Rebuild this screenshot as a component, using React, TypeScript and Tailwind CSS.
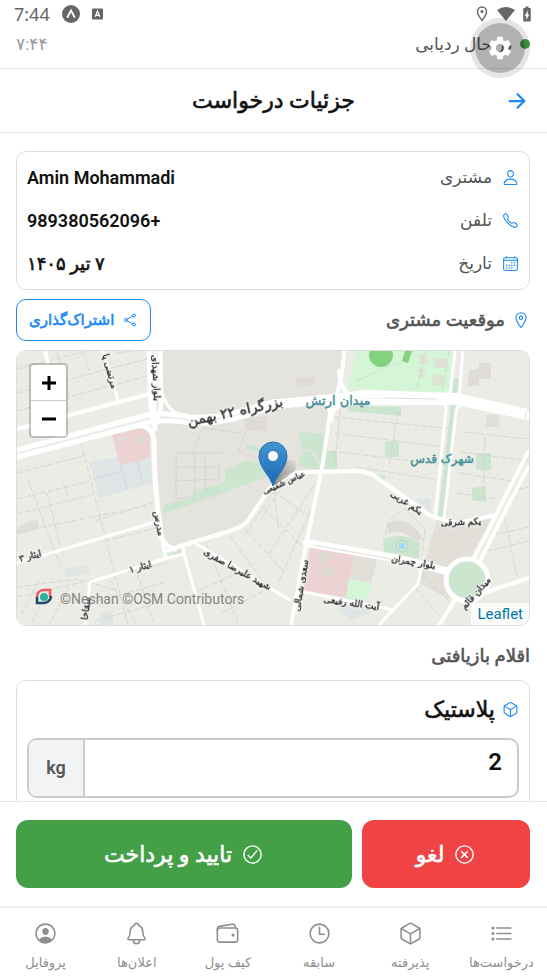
import {
  IoArrowForward,
  IoCalendarOutline,
  IoCallOutline,
  IoCheckmarkCircleOutline,
  IoCloseCircleOutline,
  IoCubeOutline,
  IoListOutline,
  IoLocationOutline,
  IoNotificationsOutline,
  IoPersonCircleOutline,
  IoPersonOutline,
  IoShareSocialOutline,
  IoTimeOutline,
  IoWalletOutline,
} from "react-icons/io5";
import { MdBatteryChargingFull, MdSettings } from "react-icons/md";

// DejaVu has no Persian semibold, so its regular weight is thickened with a stroke
const strong = "font-normal [-webkit-text-stroke:0.6px_currentColor]";

const details = [
  { label: "مشتری", value: "Amin Mohammadi", icon: IoPersonOutline, weight: "font-semibold" },
  { label: "تلفن", value: "+989380562096", icon: IoCallOutline, weight: "font-semibold" },
  { label: "تاریخ", value: "۷ تیر ۱۴۰۵", icon: IoCalendarOutline, weight: strong },
];

const tabs = [
  { label: "درخواست‌ها", icon: IoListOutline },
  { label: "پذیرفته", icon: IoCubeOutline },
  { label: "سابقه", icon: IoTimeOutline },
  { label: "کیف پول", icon: IoWalletOutline },
  { label: "اعلان‌ها", icon: IoNotificationsOutline },
  { label: "پروفایل", icon: IoPersonCircleOutline },
];

const roads = [
  { d: "M0 78 L136 42", w: 4 },
  { d: "M28 0 L31 11", w: 4 },
  { d: "M86 0 L101 49", w: 3 },
  { d: "M132 0 L134 56 L138 78", w: 5 },
  { d: "M143 0 L144 56 L137 78", w: 5 },
  { d: "M138 0 V60", w: 3 },
  { d: "M145 42 C150 60 162 66 176 66", w: 3 },
  { d: "M0 99 L130 64 Q150 61 173 66 C205 68 230 58 256 51 L323 45", w: 5 },
  { d: "M0 106 L133 71 Q152 68 173 72 C210 74 235 62 256 56 L323 49", w: 5 },
  { d: "M310 48 L350 43 L439 46 L511 62", w: 8 },
  { d: "M320 51 L439 51 L511 66", w: 6 },
  { d: "M122 74 Q136 76 137 90 L138 127 L141 160 L145 188 Q149 196 158 198", w: 5 },
  { d: "M143 180 L149 207", w: 3 },
  { d: "M0 212 L138 171", w: 3 },
  { d: "M68 274 L73 231 L150 207 L166 203 V197", w: 3 },
  { d: "M149 200 L176 191 L210 181 Q224 177 230 171 L252 138 Q264 124 286 121 L344 120 L356 124 L403 157 Q415 169 443 171 L476 165", w: 4 },
  { d: "M176 191 L215 214 L256 239 L273 249", w: 3 },
  { d: "M166 199 L187 274", w: 3 },
  { d: "M327 0 Q325 30 319 45 Q312 60 310 83 L306 111 L289 194 L274 274", w: 4 },
  { d: "M322 20 Q324 42 336 45 M302 48 Q314 50 314 70 Q314 55 332 50", w: 4 },
  { d: "M290 192 L383 208 L429 220", w: 8 },
  { d: "M456 209 L480 162 L511 101", w: 4 },
  { d: "M462 212 L484 168 L511 116", w: 4 },
  { d: "M469 241 L512 227", w: 4 },
  { d: "M438 249 L422 274", w: 4 },
  { d: "M438 0 L433 43", w: 3 },
  { d: "M446 0 L442 46", w: 3 },
  { d: "M424 50 Q429 52 429 58 L418 167", w: 3 },
  { d: "M446 53 Q440 55 439 60 L427 168", w: 3 },
  { d: "M288 241 L376 259", w: 3 },
  { d: "M403 215 Q404 227 400 234 L376 259 L362 274", w: 3 },
];

const lanes = [
  "M0 18 L84 -4 M0 42 L130 8 M0 60 L130 25 M64 92 L111 274 M0 148 L73 130 M0 163 L78 143",
  "M0 181 L130 155 M46 132 L52 146 M11 128 L18 148 L45 220 M0 122 L70 104 M0 246 L150 212",
  "M78 170 L140 150 M88 190 L142 176 M40 0 L52 45 M66 0 L72 20 M100 2 L130 -2",
  "M30 142 L46 205 M0 236 L60 228 L102 240 M22 230 L4 264 M30 238 L14 274 M52 236 L32 274",
  "M94 230 L120 274 M120 222 L136 270 M80 250 L150 231 M78 270 L170 244",
  "M186 184 L222 274 M208 178 L250 236 M225 174 L268 222 M180 240 L230 218 M205 262 L250 238",
  "M240 150 L288 198 M256 140 L295 168 M246 165 L274 122 M228 184 L262 133 M252 203 L300 130",
  "M262 230 L298 150 M256 132 L262 180",
  "M316 66 L436 78 M318 82 L432 97 M314 100 L430 114 M340 116 L428 130 M381 60 L372 116 M324 52 L318 112",
  "M446 81 L512 88 M444 101 L512 110 M442 122 L495 130 M440 142 L480 148 M468 86 L466 146",
  "M486 160 L500 225 M476 184 L512 176 M470 200 L512 190 M492 140 L512 136",
  "M339 30 L384 10 M408 0 L400 40 M432 0 L425 42 M405 224 L432 250 M398 236 L420 262",
  "M368 184 L372 170 L388 157 L408 178 L405 205",
  "M186 77 L226 82 M186 77 L176 102 M222 100 L232 70 L248 72 M222 100 L243 108",
];

const blocks = "M159 102 H205 M159 116 H202 M158 130 L200 128 M159 102 V146 M178 102 V146 M188 108 V142 M202 112 V131 M158 148 L176 146";

const mapLabels = [
  { text: "بزرگراه ۲۲ بهمن", x: 219, y: 65, r: -12, size: 14 },
  { text: "بلوار شهدای", x: 136, y: 27, r: 87, size: 9 },
  { text: "مرتضی پا", x: 90, y: 21, r: 75, size: 9 },
  { text: "مدرس", x: 139, y: 173, r: 80, size: 9 },
  { text: "ایثار ۳", x: 14, y: 208, r: -15, size: 9 },
  { text: "ایثار ۱", x: 124, y: 219, r: -15, size: 9 },
  { text: "سقاخا", x: 72, y: 258, r: -82, size: 9 },
  { text: "شهید علیرضا صفری", x: 219, y: 221, r: 29, size: 9 },
  { text: "عباس شفیعی", x: 268, y: 134, r: -24, size: 8 },
  { text: "سعدی شمالی", x: 287, y: 235, r: -80, size: 9 },
  { text: "یکم غربی", x: 388, y: 154, r: 33, size: 9 },
  { text: "یکم شرقی", x: 444, y: 174, r: -2, size: 9 },
  { text: "بلوار چمران", x: 396, y: 214, r: 10, size: 9 },
  { text: "آیت الله رفیعی", x: 334, y: 255, r: 8, size: 9 },
  { text: "میدان قائم", x: 461, y: 244, r: -48, size: 9 },
];

function StreetMap() {
  return (
    <svg
      viewBox="0 0 512 274"
      preserveAspectRatio="xMidYMid slice"
      className="block h-full w-full font-['DejaVu_Sans',sans-serif]"
      aria-label="نقشه"
    >
      <rect width="512" height="274" fill="#ebece6" />
      <path d="M143 0 H327 L306 120 L286 121 Q264 124 252 138 L230 171 L155 197 L145 188 L137 82 Z" fill="#e5e3de" />
      <path d="M420 168 L476 166 L450 212 L432 248 L402 232 Z" fill="#e1dfd8" />
      <path d="M337 204 L360 208 L354 232 L332 228 Z M0 175 L20 168 L22 178 L0 184 Z M392 40 h20 v12 h-20 Z M470 64 h12 v12 h-14 Z" fill="#e1dfd8" />
      <path d="M452 20 l10 -3 v18 h-12 Z M462 12 h12 v16 h-12 Z M278 26 h20 v8 h-18 Z M226 66 h24 v14 h-20 Z" fill="#dedcd5" />
      <path d="M369 173 q20 -12 37 14 l-6 3 q-14 -12 -28 -8 Z" fill="#dedcd5" />
      <path d="M72 111 L101 106 L103 113 L133 107 L136 132 L82 147 Z" fill="#dfe5e5" />
      <path d="M103 113 L110 138 M120 110 L126 134 M76 128 L106 120" stroke="#cfd6e4" fill="none" />
      <path d="M46 218 L72 214 V222 L50 226 Z M84 262 L96 260 V274 H82 Z M316 250 L350 240 L354 262 L332 270 Z M398 148 h16 v14 Z" fill="#dfe5e5" />
      <path d="M95 84 L126 77 Q133 79 133 85 V107 L103 114 Z M293 196 L337 204 L329 246 L286 241 Z" fill="#ecd2d3" />
      <path d="M99 87 l11 -3 v4 l-10 3 Z M117 86 l12 -3 v8 l-8 3 Z M302 201 h14 v8 h-5 v6 h6 v10 h-17 v-5 h8 v-8 h-6 Z" fill="#e1d9d3" />
      <path d="M146 154 L176 146 V141 L208 131 V119 L230 109 L246 112 L256 121 L250 126 L146 163 Z M208 131 V141" fill="#cce5cf" />
      <path d="M229 93 L248 97 V102 L229 98 Z M281 83 Q284 79 307 84 V100 L304 118 H294 Q280 116 281 110 L286 101 Z M309 100 H320 V118 H307 Z" fill="#cce5cf" />
      <path d="M283 101 Q293 96 297 104 T304 114" fill="none" stroke="#e5e3de" strokeWidth="2" />
      <path d="M331 55 L384 56 V65 L331 60 Z M368 90 h14 v16 h-14 Z M459 102 h15 v18 l-15 -2 Z M455 137 l14 -2 v16 l-14 -2 Z M356 124 L368 124 V132 Z" fill="#cce5cf" />
      <path d="M437 27 H442 L429 166 H421 Z M146 190 L154 198 L150 204 Z M151 204 L165 197 V202 L150 207 Z M366 188 Q386 180 403 192 L402 208 L367 201 Z" fill="#cce5cf" />
      <path d="M339 0 H437 L432 43 L331 37 Z M332 228 L354 232 L351 250 L329 246 Z" fill="#d5f5d7" />
      <path d="M402 3 h8 v10 h-8 Z M417 7 h13 v10 h-13 Z M416 24 h11 v10 h-12 Z M402 18 h6 v9 h-7 Z" fill="#dfe3d5" />
      <circle cx="364" cy="4" r="12" fill="#82d27f" />
      <path d="M388 0 H395 L391 12 L385 10 Z" fill="#82d27f" />
      <circle cx="385" cy="195" r="6" fill="none" stroke="#b3d5c3" />
      <circle cx="385" cy="195" r="3" fill="#99dcfb" />
      {lanes.map((d) => (
        <path key={d} d={d} fill="none" stroke="#d0d0cb" strokeDasharray="6 2" strokeWidth="0.8" />
      ))}
      <path d={blocks} fill="none" stroke="#d2d1cc" strokeWidth="0.8" />
      {roads.map((road) => (
        <path
          key={road.d}
          d={road.d}
          fill="none"
          stroke="#ffffff"
          strokeWidth={road.w}
          strokeLinecap="round"
          strokeLinejoin="round"
        />
      ))}
      <path d="M296 194 L380 209 M366 47 L420 48 M509 68 Q507 62 512 58" fill="none" stroke="#dededa" strokeWidth="1" />
      <circle cx="450" cy="229" r="21" fill="#cce5cf" stroke="#ffffff" strokeWidth="5" />
      {mapLabels.map((label) => (
        <g
          key={label.text}
          transform={`translate(${label.x} ${label.y}) rotate(${label.r})`}
          textAnchor="middle"
          fontSize={label.size}
        >
          <text
            fill="#2b2b2b"
            stroke="#2b2b2b"
            strokeWidth="0.4"
            className="[filter:drop-shadow(0_0_1px_#fff)_drop-shadow(0_0_1px_#fff)]"
          >
            {label.text}
          </text>
        </g>
      ))}
      <g fill="#4c929b" stroke="#4c929b" strokeWidth="0.5" textAnchor="middle">
        <text x="321" y="54" fontSize="13">میدان ارتش</text>
        <text x="425" y="112" fontSize="12">شهرک قدس</text>
      </g>
      <g fill="none" strokeWidth="2.6">
        <path d="M20 246 A7 7 0 0 1 26 239 L33 239 V246" stroke="#ef5a5f" />
        <path d="M20 246 V252 H27 A7 7 0 0 0 34 245" stroke="#204a66" />
      </g>
      <circle cx="27" cy="246" r="4" fill="#27b59a" />
      <text x="43" y="253" fontSize="14" fill="#858585" className="font-['Roboto',sans-serif]" direction="ltr">
        ©Neshan ©OSM Contributors
      </text>
    </svg>
  );
}

function MapPin() {
  return (
    <svg width="56" height="46" viewBox="0 0 56 46" aria-hidden="true">
      <defs>
        <linearGradient id="pin" x1="0" y1="0" x2="0" y2="1">
          <stop offset="0" stopColor="#4297d5" />
          <stop offset="1" stopColor="#1b66b5" />
        </linearGradient>
        <linearGradient id="shade" x1="0" y1="1" x2="1" y2="0">
          <stop offset="0" stopColor="#000" stopOpacity="0.5" />
          <stop offset="1" stopColor="#000" stopOpacity="0" />
        </linearGradient>
      </defs>
      <path d="M28 45 L34 26 Q46 14 51 21 Q54 29 42 36 Z" fill="url(#shade)" />
      <path
        d="M28 45 C25 34 14 27 14 15 A14 14 0 0 1 42 15 C42 27 31 34 28 45 Z"
        fill="url(#pin)"
        stroke="#2a70ac"
      />
      <circle cx="28" cy="15" r="5.5" fill="#fff" stroke="#2f75ae" />
    </svg>
  );
}

function StatusBar() {
  return (
    <div dir="ltr" className="flex h-7 items-center justify-between pl-[14px] pr-[11px] text-[#666]">
      <div className="flex items-center gap-3">
        <span className="font-['Noto_Sans',sans-serif] text-lg leading-7">7:44</span>
        <svg width="18" height="18" viewBox="0 0 18 18" aria-hidden="true">
          <circle cx="9" cy="9" r="9" fill="#666" />
          <path d="M5.5 12 L9 5.5 L12.5 12" fill="none" stroke="#fff" strokeWidth="1.8" strokeLinecap="round" />
        </svg>
        <svg width="11" height="12" viewBox="0 0 12 12" aria-hidden="true">
          <rect width="12" height="12" rx="1" fill="#666" />
          <path d="M3.5 9 L6 3 L8.5 9 M4.5 7.5 H7.5" fill="none" stroke="#fff" strokeWidth="1.4" />
        </svg>
      </div>
      <div className="flex items-center gap-[3px]">
        <svg className="mr-[6px]" width="12" height="16" viewBox="0 0 12 16" fill="none" stroke="#666" strokeWidth="1.4" aria-hidden="true">
          <path d="M6 14.5 C4 11.5 1.5 9 1.5 5.5 A4.5 4.5 0 0 1 10.5 5.5 C10.5 9 8 11.5 6 14.5 Z" />
          <circle cx="6" cy="5.5" r="1.5" fill="#666" stroke="none" />
        </svg>
        <svg width="18" height="14" viewBox="0 0 18 14" fill="#666" aria-hidden="true">
          <path d="M9 14 L0 3 Q9 -3 18 3 Z" />
        </svg>
        <MdBatteryChargingFull size={18} />
      </div>
    </div>
  );
}

export default function App() {
  return (
    <div
      dir="rtl"
      className="relative flex h-screen flex-col overflow-hidden bg-white font-['Roboto','DejaVu_Sans',sans-serif] text-[#111]"
    >
      <StatusBar />

      <div className="flex h-[41px] items-start justify-between border-b border-[#e8e8e8] pl-4 pr-[17px] pt-1">
        <div className="flex items-center gap-2 text-[17px] leading-6 text-[#555]">
          <span className="h-[10px] w-[10px] rounded-full bg-[#43a047]" />
          در حال ردیابی
        </div>
        <span className="text-[17px] leading-6 text-[#999]">۷:۴۴</span>
      </div>

      <button
        type="button"
        aria-label="تنظیمات"
        className="absolute right-[17px] top-[18px] grid h-[60px] w-[60px] place-items-center rounded-full border-[5px] border-black/10 bg-black/30 bg-clip-padding text-white"
      >
        <MdSettings size={28} />
      </button>

      <header className="grid h-16 grid-cols-[24px_1fr_24px] items-center border-b border-[#e8e8e8] px-[18px]">
        <button type="button" aria-label="بازگشت" className="text-[#1e88f5]">
          <IoArrowForward size={24} />
        </button>
        <h1 className={`text-center text-[22px] ${strong}`}>جزئیات درخواست</h1>
      </header>

      <main className="min-h-0 flex-1 overflow-y-auto pl-4 pr-[17px] pt-[18px] [scrollbar-width:none]">
        <dl className="rounded-[10px] border border-[#ddd] px-[10px] py-1">
          {details.map(({ label, value, icon: Icon, weight }) => (
            <div key={label} className="flex h-[43px] items-center justify-between">
              <dt className="flex items-center gap-[10px] text-[17px] text-[#555]">
                <Icon size={17} className="text-[#1e88f5]" />
                {label}
              </dt>
              <dd className={`text-lg ${weight}`}>{value}</dd>
            </div>
          ))}
        </dl>

        <div className="mt-[9px] flex items-center justify-between">
          <h2 className={`flex items-center gap-[7px] text-lg text-[#555] ${strong}`}>
            <IoLocationOutline size={18} className="text-[#1e88f5]" />
            موقعیت مشتری
          </h2>
          <button
            type="button"
            className={`flex h-[42px] items-center gap-2 rounded-[10px] border border-[#1e88f5] px-3 text-[15px] text-[#1e88f5] ${strong}`}
          >
            <IoShareSocialOutline size={16} />
            اشتراک‌گذاری
          </button>
        </div>

        <div className="relative mt-[9px] h-[276px] overflow-hidden rounded-[10px] border border-[#ddd]">
          <StreetMap />
          <div className="absolute left-1/2 top-[90px] -translate-x-1/2">
            <MapPin />
          </div>
          <div className="absolute left-3 top-3 flex flex-col rounded border-2 border-black/20 bg-clip-padding text-black">
            <button type="button" aria-label="بزرگ‌نمایی" className="grid h-9 w-[35px] place-items-center rounded-t-sm border-b border-[#ccc] bg-white">
              <svg width="16" height="16" stroke="currentColor" strokeWidth="3" aria-hidden="true">
                <path d="M1 8 H15 M8 1 V15" />
              </svg>
            </button>
            <button type="button" aria-label="کوچک‌نمایی" className="grid h-[35px] w-[35px] place-items-center rounded-b-sm bg-white">
              <svg width="16" height="16" stroke="currentColor" strokeWidth="3" aria-hidden="true">
                <path d="M1 8 H15" />
              </svg>
            </button>
          </div>
          <a href="#leaflet" className="absolute bottom-0 right-0 bg-white/80 px-[6px] text-[15px] leading-[22px] text-[#0078a8]">
            Leaflet
          </a>
        </div>

        <h2 className={`mt-4 text-lg leading-7 text-[#555] ${strong}`}>اقلام بازیافتی</h2>

        <section className="mt-[10px] rounded-[10px] border border-[#ddd] px-[10px] pb-4">
          <label htmlFor="weight" className={`flex h-[57px] items-center gap-[7px] text-[22px] ${strong}`}>
            <IoCubeOutline size={17} className="text-[#1e88f5]" />
            پلاستیک
          </label>
          <div className="flex h-[60px] overflow-hidden rounded-[10px] border-2 border-[#ccc]">
            <input
              id="weight"
              type="text"
              inputMode="decimal"
              defaultValue="2"
              className="min-w-0 flex-1 px-[15px] pb-3 text-2xl font-semibold outline-none"
            />
            <span className="grid w-14 place-items-center border-r-2 border-[#ccc] bg-[#f2f3f5] text-lg font-semibold text-[#555]">
              kg
            </span>
          </div>
        </section>
      </main>

      <div className="grid grid-cols-[1fr_2fr] gap-[10px] border-t border-[#e8e8e8] bg-white pb-[18px] pl-4 pr-[17px] pt-[18px] text-[22px] text-white">
        <button type="button" className={`flex h-[68px] items-center justify-center gap-[9px] rounded-xl bg-[#f04444] ${strong}`}>
          <IoCloseCircleOutline size={23} />
          لغو
        </button>
        <button type="button" className={`flex h-[68px] items-center justify-center gap-[9px] rounded-xl bg-[#43a047] ${strong}`}>
          <IoCheckmarkCircleOutline size={23} />
          تایید و پرداخت
        </button>
      </div>

      <nav className="grid h-[72px] grid-cols-6 border-t-2 border-[#eee] bg-white text-[#8e8e8e]">
        {tabs.map(({ label, icon: Icon }) => (
          <a key={label} href="#tab" className="flex flex-col items-center gap-[7px] pt-[13px]">
            <Icon size={25} />
            <span className="whitespace-nowrap text-[13px] leading-5">{label}</span>
          </a>
        ))}
      </nav>
    </div>
  );
}
